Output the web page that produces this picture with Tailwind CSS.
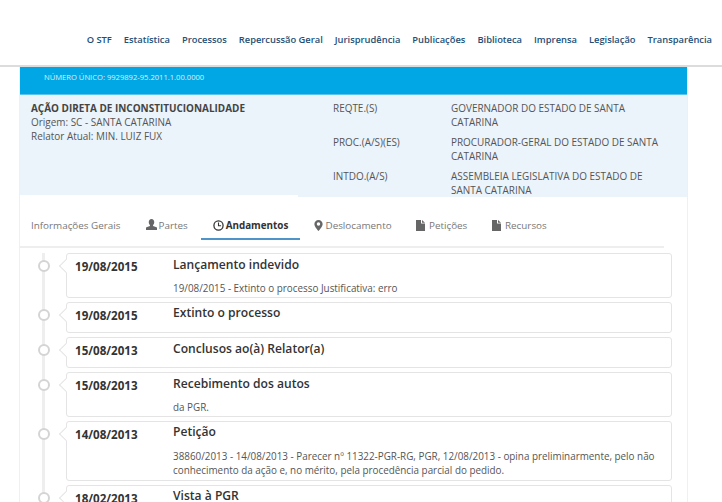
<!DOCTYPE html>
<html lang="pt">
<head>
    <meta charset="UTF-8">
    <title>STF - Andamentos</title>
    <script src="https://cdn.jsdelivr.net/npm/@tailwindcss/browser@4"></script>
</head>
<body class="bg-white h-[502px] overflow-hidden font-['Open_Sans',sans-serif] text-[#555]">
    <!-- top nav -->
    <header class="h-[67px] bg-white border-b-2 border-[#dcdcdc] flex items-start justify-end pt-[33px] pr-[10px]">
        <nav class="flex gap-[12px] text-[9.35px] leading-[14px] font-semibold text-[#1d4f77]">
            <a>O STF</a>
            <a>Estatística</a>
            <a>Processos</a>
            <a>Repercussão Geral</a>
            <a>Jurisprudência</a>
            <a>Publicações</a>
            <a>Biblioteca</a>
            <a>Imprensa</a>
            <a>Legislação</a>
            <a>Transparência</a>
        </nav>
    </header>

    <main class="ml-[19px] w-[669px] border-x border-[#f0f0f0] h-[435px] overflow-hidden">
        <div class="h-[28px] bg-[#00a7e4] border-b border-[#5cc3ee] pl-[24px] pt-[5px] text-[7.6px] leading-[11px] text-[#d9f1fb]">NÚMERO ÚNICO: 9929892-95.2011.1.00.0000</div>

        <!-- process summary -->
        <section class="h-[102px] flex items-start text-[9.95px] leading-[14px]">
            <div class="w-[278px] h-[100px] bg-[#ebf3fb] pl-[11px] pt-[6px]">
                <div class="font-bold text-[#444]">AÇÃO DIRETA DE INCONSTITUCIONALIDADE</div>
                <div>Origem: SC - SANTA CATARINA</div>
                <div>Relator Atual: MIN. LUIZ FUX</div>
            </div>
            <div class="flex-1 h-[102px] bg-[#ebf3fb] pl-[35px] pt-[6px] flex flex-col gap-[6px] overflow-hidden">
                <div class="flex"><span class="w-[118px] shrink-0">REQTE.(S)</span><span class="w-[215px]">GOVERNADOR DO ESTADO DE SANTA CATARINA</span></div>
                <div class="flex"><span class="w-[118px] shrink-0">PROC.(A/S)(ES)</span><span class="w-[215px]">PROCURADOR-GERAL DO ESTADO DE SANTA CATARINA</span></div>
                <div class="flex"><span class="w-[118px] shrink-0">INTDO.(A/S)</span><span class="w-[215px]">ASSEMBLEIA LEGISLATIVA DO ESTADO DE SANTA CATARINA</span></div>
            </div>
        </section>

        <!-- tabs -->
        <div class="mr-[23px] h-[51px] border-b-2 border-[#eeeeee] flex text-[9.85px] text-[#777] pt-[20px] leading-[16px]">
            <a class="pl-[11px] w-[126px]">Informações Gerais</a>
            <a class="w-[55px] flex items-start gap-[1.5px]">
                <svg class="w-[11px] h-[11px] mt-[2px]" viewBox="0 0 12 12"><path fill="#666" d="M6 0c1.9 0 3 1.5 3 3.5 0 1.3-.6 2.5-1.3 3.1v.9L11.5 9c.4.2.5.5.5.9V12H0V9.900c0-.4.1-.7.5-.9l3.800-1.500v-.9C3.600 6 3 4.800 3 3.500 3 1.500 4.100 0 6 0z"/></svg>
                Partes
            </a>
            <a class="w-[99px] h-[23px] border-b-2 border-[#4f94c8] flex items-start justify-center gap-[2px] font-bold text-[#333]">
                <svg class="w-[11px] h-[11px] mt-[2.500px]" viewBox="0 0 12 12" fill="none" stroke="#333"><circle cx="6" cy="6" r="5" stroke-width="1.400"/><path d="M6 2.800V6.300H8.800" stroke-width="1.200"/></svg>
                Andamentos
            </a>
            <a class="ml-[14px] w-[102px] flex items-start gap-[2.500px]">
                <svg class="w-[9px] h-[11px] mt-[2.500px]" viewBox="0 0 9 12"><path fill="#666" fill-rule="evenodd" d="M4.500 0C7 0 9 1.900 9 4.300 9 7 5.800 10.500 4.500 12 3.200 10.500 0 7 0 4.300 0 1.900 2 0 4.500 0zm0 2.500a1.900 1.900 0 1 0 0 3.800 1.900 1.900 0 0 0 0-3.800z"/></svg>
                Deslocamento
            </a>
            <a class="w-[76px] flex items-start gap-[4px]">
                <svg class="w-[9px] h-[11px] mt-[2.500px]" viewBox="0 0 9 11"><path fill="#666" d="M0 0h5v3.500h4V11H0z"/><path fill="#666" d="M6 0l3 2.700H6z"/></svg>
                Petições
            </a>
            <a class="flex items-start gap-[4px]">
                <svg class="w-[9px] h-[11px] mt-[2.500px]" viewBox="0 0 9 11"><path fill="#666" d="M0 0h5v3.500h4V11H0z"/><path fill="#666" d="M6 0l3 2.700H6z"/></svg>
                Recursos
            </a>
        </div>

        <!-- timeline -->
        <ul class="relative mt-[5px] flex flex-col gap-[4px] text-[9.87px] leading-[14px]">
            <li class="absolute left-[22px] top-0 bottom-0 w-[3px] bg-[#eeeeee]"></li>

            <li class="relative ml-[46px] mr-[15px] h-[45px] border border-[#e4e4e4] rounded-[3px] bg-white flex">
                <span class="absolute left-[-29px] top-[6px] w-[12px] h-[12px] rounded-full border-2 border-[#d4d4d4] bg-white"></span>
                <span class="absolute left-[-6px] top-[7px] w-[10px] h-[10px] rotate-45 border-l border-b border-[#e4e4e4] bg-white"></span>
                <div class="w-[106px] pl-[8px] pt-[6px] text-[11.6px] leading-[14px] font-bold text-[#333] shrink-0">19/08/2015</div>
                <div class="flex-1 pr-[10px] pt-[2px]">
                    <div class="text-[12.1px] leading-[17px] font-semibold text-[#333]">Lançamento indevido</div>
                    <div class="mt-[8px]">19/08/2015 - Extinto o processo Justificativa: erro</div>
                </div>
            </li>

            <li class="relative ml-[46px] mr-[15px] h-[31px] border border-[#e4e4e4] rounded-[3px] bg-white flex">
                <span class="absolute left-[-29px] top-[6px] w-[12px] h-[12px] rounded-full border-2 border-[#d4d4d4] bg-white"></span>
                <span class="absolute left-[-6px] top-[7px] w-[10px] h-[10px] rotate-45 border-l border-b border-[#e4e4e4] bg-white"></span>
                <div class="w-[106px] pl-[8px] pt-[6px] text-[11.6px] leading-[14px] font-bold text-[#333] shrink-0">19/08/2015</div>
                <div class="flex-1 pr-[10px] pt-[1px] text-[12.1px] leading-[17px] font-semibold text-[#333]">Extinto o processo</div>
            </li>

            <li class="relative ml-[46px] mr-[15px] h-[31px] border border-[#e4e4e4] rounded-[3px] bg-white flex">
                <span class="absolute left-[-29px] top-[6px] w-[12px] h-[12px] rounded-full border-2 border-[#d4d4d4] bg-white"></span>
                <span class="absolute left-[-6px] top-[7px] w-[10px] h-[10px] rotate-45 border-l border-b border-[#e4e4e4] bg-white"></span>
                <div class="w-[106px] pl-[8px] pt-[6px] text-[11.6px] leading-[14px] font-bold text-[#333] shrink-0">15/08/2013</div>
                <div class="flex-1 pr-[10px] pt-[2px] text-[12.1px] leading-[17px] font-semibold text-[#333]">Conclusos ao(à) Relator(a)</div>
            </li>

            <li class="relative ml-[46px] mr-[15px] h-[45px] border border-[#e4e4e4] rounded-[3px] bg-white flex">
                <span class="absolute left-[-29px] top-[6px] w-[12px] h-[12px] rounded-full border-2 border-[#d4d4d4] bg-white"></span>
                <span class="absolute left-[-6px] top-[7px] w-[10px] h-[10px] rotate-45 border-l border-b border-[#e4e4e4] bg-white"></span>
                <div class="w-[106px] pl-[8px] pt-[6px] text-[11.6px] leading-[14px] font-bold text-[#333] shrink-0">15/08/2013</div>
                <div class="flex-1 pr-[10px] pt-[2px]">
                    <div class="text-[12.1px] leading-[17px] font-semibold text-[#333]">Recebimento dos autos</div>
                    <div class="mt-[8px]">da PGR.</div>
                </div>
            </li>

            <li class="relative ml-[46px] mr-[15px] h-[60px] border border-[#e4e4e4] rounded-[3px] bg-white flex">
                <span class="absolute left-[-29px] top-[6px] w-[12px] h-[12px] rounded-full border-2 border-[#d4d4d4] bg-white"></span>
                <span class="absolute left-[-6px] top-[7px] w-[10px] h-[10px] rotate-45 border-l border-b border-[#e4e4e4] bg-white"></span>
                <div class="w-[106px] pl-[8px] pt-[6px] text-[11.6px] leading-[14px] font-bold text-[#333] shrink-0">14/08/2013</div>
                <div class="flex-1 pr-[10px] pt-[1px]">
                    <div class="text-[12.1px] leading-[17px] font-semibold text-[#333]">Petição</div>
                    <div class="mt-[9px]">38860/2013 - 14/08/2013 - Parecer nº 11322-PGR-RG, PGR, 12/08/2013 - opina preliminarmente, pelo não conhecimento da ação e, no mérito, pela procedência parcial do pedido.</div>
                </div>
            </li>

            <li class="relative ml-[46px] mr-[15px] h-[31px] border border-[#e4e4e4] rounded-[3px] bg-white flex">
                <span class="absolute left-[-29px] top-[6px] w-[12px] h-[12px] rounded-full border-2 border-[#d4d4d4] bg-white"></span>
                <span class="absolute left-[-6px] top-[7px] w-[10px] h-[10px] rotate-45 border-l border-b border-[#e4e4e4] bg-white"></span>
                <div class="w-[106px] pl-[8px] pt-[6px] text-[11.6px] leading-[14px] font-bold text-[#333] shrink-0">18/02/2013</div>
                <div class="flex-1 pr-[10px] pt-[1px] text-[12.1px] leading-[17px] font-semibold text-[#333]">Vista à PGR</div>
            </li>
        </ul>
    </main>
</body>
</html>
